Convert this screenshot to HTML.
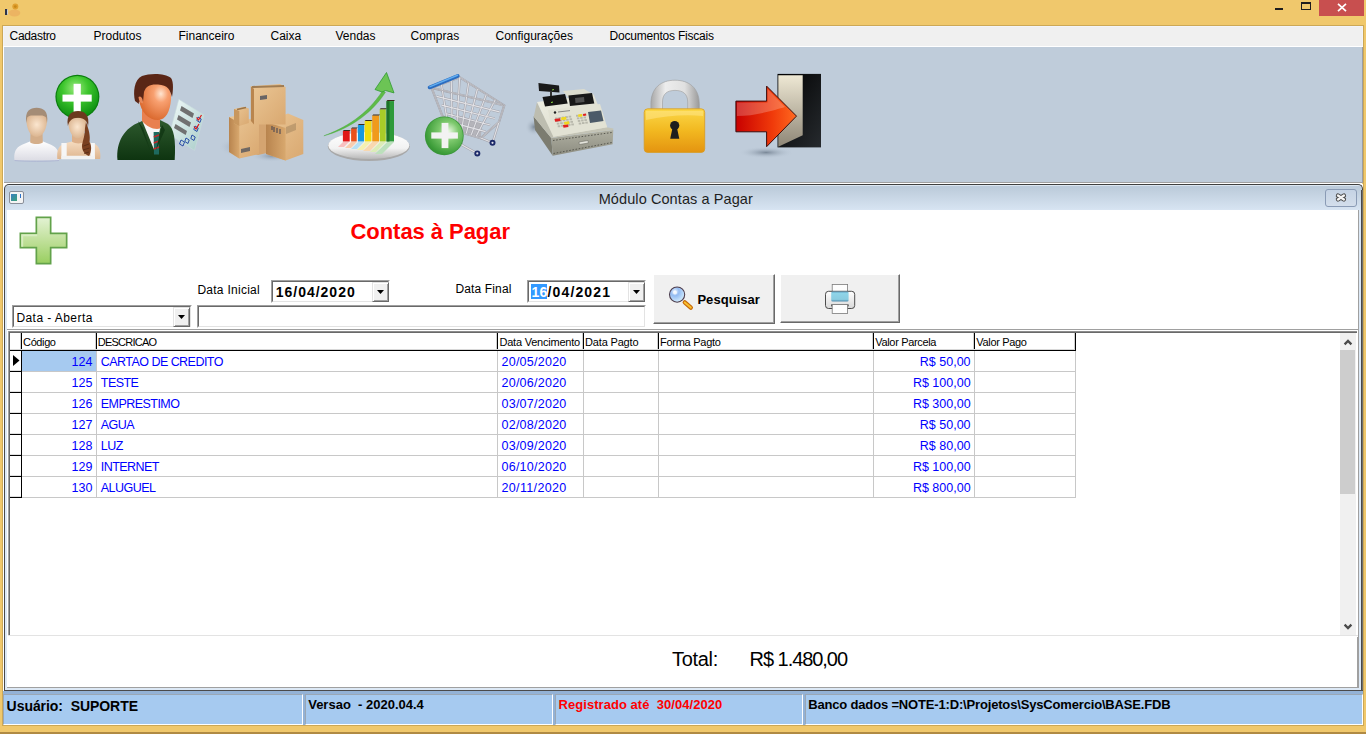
<!DOCTYPE html>
<html><head><meta charset="utf-8">
<style>
*{margin:0;padding:0;box-sizing:border-box}
html,body{width:1366px;height:734px;overflow:hidden;background:#F0C86C;font-family:"Liberation Sans",sans-serif;color:#000}
.a{position:absolute}
.t{position:absolute;white-space:nowrap;line-height:1}
svg{position:absolute;overflow:visible}
</style></head><body>

<div class="a" style="left:1275px;top:8px;width:8px;height:2px;background:#1E1E1E;"></div>
<div class="a" style="left:1301px;top:2px;width:10px;height:8px;border:1px solid #1E1E1E;border-top-width:2px;"></div>
<div class="a" style="left:1319px;top:0px;width:45px;height:16px;background:#C84F4F;"></div>
<svg style="left:1337px;top:2.5px" width="10" height="9" viewBox="0 0 10 9"><path d="M1 0.8L9 8.2M9 0.8L1 8.2" stroke="#fff" stroke-width="1.7"/></svg>
<svg style="left:0;top:0" width="24" height="20" viewBox="0 0 24 20"><ellipse cx="14.5" cy="13" rx="5.8" ry="3.4" fill="#ECB462"/><circle cx="15.3" cy="6.6" r="3" fill="#E0A030"/><circle cx="15.3" cy="6.6" r="1.4" fill="#C88818"/><rect x="5" y="9" width="2.2" height="6" fill="#2E3448"/><rect x="7.2" y="9.5" width="0.8" height="5" fill="#C8D8F0"/></svg>
<div class="a" style="left:2px;top:25px;width:1362px;height:1px;background:#CCA856;"></div>
<div class="a" style="left:2px;top:25px;width:1px;height:700px;background:#CCA856;"></div>
<div class="a" style="left:1363px;top:25px;width:1px;height:700px;background:#CCA856;"></div>
<div class="a" style="left:3px;top:26px;width:1360px;height:20px;background:#F2F4FA;"></div>
<div class="a" style="left:4px;top:27px;width:1358px;height:19px;background:#F0F0F0;"></div>
<div class="a" style="left:3px;top:46px;width:1360px;height:1px;background:#FFFFFF;"></div>
<div class="a" style="left:3px;top:47px;width:1px;height:645px;background:#FFFFFF;"></div>
<div class="t" style="left:9.60px;top:29.84px;font-size:12.00px;letter-spacing:-0.331px;">Cadastro</div>
<div class="t" style="left:93.50px;top:29.84px;font-size:12.00px;">Produtos</div>
<div class="t" style="left:178.50px;top:29.84px;font-size:12.00px;">Financeiro</div>
<div class="t" style="left:270.50px;top:29.84px;font-size:12.00px;">Caixa</div>
<div class="t" style="left:335.50px;top:29.84px;font-size:12.00px;">Vendas</div>
<div class="t" style="left:410.50px;top:29.84px;font-size:12.00px;">Compras</div>
<div class="t" style="left:495.50px;top:29.84px;font-size:12.00px;">Configurações</div>
<div class="t" style="left:609.50px;top:29.84px;font-size:12.00px;letter-spacing:-0.209px;">Documentos Fiscais</div>
<div class="a" style="left:4px;top:47px;width:1358px;height:135px;background:#BFCCDA;"></div>
<div class="a" style="left:1362px;top:47px;width:1px;height:136px;background:#9A9EA8;"></div>
<div class="a" style="left:4px;top:182px;width:1358px;height:1px;background:#A0A0A0;"></div>
<div class="a" style="left:4px;top:183px;width:1358px;height:1px;background:#FFFFFF;"></div>
<svg style="left:10px;top:70px" width="100" height="100" viewBox="0 0 100 100">
<defs>
<radialGradient id="g1" cx="0.45" cy="0.3" r="0.7"><stop offset="0" stop-color="#9BEA7E"/><stop offset="0.45" stop-color="#3CC52C"/><stop offset="1" stop-color="#0C8E10"/></radialGradient>
<radialGradient id="sk1" cx="0.5" cy="0.45" r="0.6"><stop offset="0" stop-color="#FBE6CF"/><stop offset="1" stop-color="#D8B08A"/></radialGradient>
<linearGradient id="ts1" x1="0" y1="0" x2="0" y2="1"><stop offset="0" stop-color="#FFFFFF"/><stop offset="1" stop-color="#DCDCE4"/></linearGradient>
<linearGradient id="skb" x1="0" y1="0" x2="0" y2="1"><stop offset="0" stop-color="#F6DCC0"/><stop offset="1" stop-color="#DDB48E"/></linearGradient>
</defs>
<circle cx="67.4" cy="26.8" r="22" fill="#0A7E0E"/>
<circle cx="67.4" cy="26.8" r="20.8" fill="url(#g1)"/>
<rect x="52.5" y="24.6" width="29.2" height="7" fill="#fff"/>
<rect x="63.6" y="13.8" width="7.2" height="28" fill="#fff"/>
<!-- man -->
<path d="M4.5 90.5 C3.5 83 5.5 77.5 12 74.8 L20.5 71.2 C24 73.5 29 73.5 32.5 71.2 L41 74.8 C47.5 77.5 50 83 49 90.5 Z" fill="url(#ts1)"/>
<path d="M4.5 90.5 C15 91.5 38 91.5 49 90.5" stroke="#A8B0D0" stroke-width="0.8" fill="none"/>
<path d="M20.5 62 L32.5 62 L32.8 72.5 C29 74.5 24 74.5 20.2 72.5 Z" fill="#D4AE8A"/>
<path d="M16.3 49 C16.3 43 21 44.8 26.6 44.8 C32.2 44.8 37.2 43 37.2 49 C37.2 58 33 67 26.6 67 C20.2 67 16.3 58 16.3 49 Z" fill="url(#sk1)"/>
<path d="M16.4 53 C14.5 41 20 37.8 26.6 37.8 C33.2 37.8 38.8 41 37 53 L36.2 47.5 C33.5 44.5 30 45.6 26.6 45.6 C23 45.6 19.5 44.5 17.2 47.5 Z" fill="#A48C76"/>
<!-- woman -->
<path d="M47.3 89 C46.5 81 48.5 75.5 54 73.5 L62 71.5 L74.7 71.5 L84 73.5 C89 75.5 91 81 90.2 89 Z" fill="url(#skb)"/>
<rect x="51.4" y="73" width="5.3" height="16" fill="#F6F6F6"/>
<rect x="80.4" y="73" width="4.5" height="16" fill="#F6F6F6"/>
<path d="M51.4 85.7 L84.9 85.7 L84.9 89.3 L51.4 89.3Z" fill="#F2F2F2"/>
<path d="M62 63 L74.7 63 L74.7 71.8 C71 74 66 74 62 71.8 Z" fill="#DDB08A"/>
<path d="M58.3 52 C58.3 46 62.5 47.5 67.7 47.5 C72.9 47.5 76.3 46 76.3 52 C76.3 60 73 68.5 67.7 68.5 C62.4 68.5 58.3 60 58.3 52 Z" fill="url(#sk1)"/>
<path d="M57.9 56 C56 45 61.5 41.1 68.1 41.1 C74.7 41.1 80 45 78 57 C77.5 51 74.5 48 68 47.8 C62 47.8 59 51 57.9 56 Z" fill="#6C3A1E"/>
<path d="M76 52 C79 60 80.5 66 79.5 72 C82 76 81.5 82 79 86 C74.5 84.5 71.5 80 72 75 C73 70 75.2 64 75 58 Z" fill="#7A4020"/>
<path d="M73.5 76 L79 74 M73 80 L79.5 78 M74 83.5 L79 82" stroke="#4E2612" stroke-width="0.7"/>
</svg>
<svg style="left:110px;top:70px" width="100" height="100" viewBox="0 0 100 100">
<defs>
<radialGradient id="fc2" cx="0.68" cy="0.32" r="0.75"><stop offset="0" stop-color="#FFE6D2"/><stop offset="0.3" stop-color="#F8A070"/><stop offset="1" stop-color="#D86428"/></radialGradient>
<linearGradient id="st2" x1="0" y1="0" x2="0" y2="1"><stop offset="0" stop-color="#2E5A2E"/><stop offset="1" stop-color="#0E3410"/></linearGradient>
<linearGradient id="pp2" x1="0" y1="0" x2="1" y2="1"><stop offset="0" stop-color="#F2FAFA"/><stop offset="1" stop-color="#A8CCC8"/></linearGradient>
</defs>
<path d="M68.8 29.3 L94 45 L84.5 80.4 L59.3 64.7 Z" fill="url(#pp2)" stroke="#C8DCDC" stroke-width="0.6"/>
<path d="M71.5 36 L84 43.5 L82.5 48 L70 40.5Z M68.5 45 L81 52.5 L79.5 57 L67 49.5Z M65.5 54 L77 61 L75.7 65 L64 58Z" fill="#707070"/>
<path d="M88 47l-1.2 3.5 3.2 2 1.2-3.5z M85 56l-1.2 3.5 3.2 2 1.2-3.5z M82 65l-1.2 3.5 3.2 2 1.2-3.5z M76 68l-1.2 3.5 3.2 2 1.2-3.5z M71 70l-1.5 4 3.5 2 1.5-4z" fill="none" stroke="#1A40A0" stroke-width="0.9"/>
<path d="M86.5 47.5l2 2.5 3-5 M84 56.5l2 2.5 3-5" fill="none" stroke="#E01818" stroke-width="1.2"/>
<path d="M7.5 90 C6 72 14 58 30 52 L36 49 L50 50 L58 54 C64 58 66 70 64.7 90 Z" fill="url(#st2)"/>
<path d="M32.5 51.5 L50.5 57 L45 82 Z" fill="#F6F6F6"/>
<path d="M43.6 62 L49 62 L49 84.5 L44 84.5 Z" fill="#1E6A5E"/>
<path d="M43.8 67 L49 65 M43.8 73 L49 71 M43.8 79 L49 77" stroke="#C02828" stroke-width="1.4"/>
<path d="M28 51 L40 80 L33 58 Z M52 55 L46 80 L55 60Z" fill="#143A16"/>
<path d="M32 39.5 L50 42 L50 58.6 C44 60 37 57 32 51 Z" fill="#E88050"/>
<path d="M29 22 C28 14 36 11 46 11.5 C57 12 62 20 61 30 C60 41 56 50 48 50 C38 50 31 42 29 30 Z" fill="url(#fc2)"/>
<path d="M25 31 C23 22 24 10 32 6 C40 3 55 3 61 8 C64 12 63 22 62 27 C60 20 58 15 48 14.5 C40 14 36 16 34 22 L33 32 C31 30 28 31 29 34 Z" fill="#5A2616"/>
<path d="M28.5 27 C31 25 33 29 33 33 C31 34 29 32 28.5 27Z" fill="#E8895A"/>
</svg>
<svg style="left:210px;top:70px" width="100" height="100" viewBox="0 0 100 100">
<defs>
<linearGradient id="bx1" x1="0" y1="0" x2="1" y2="1"><stop offset="0" stop-color="#EBC796"/><stop offset="1" stop-color="#D9A870"/></linearGradient>
<linearGradient id="bx2" x1="0" y1="0" x2="1" y2="0"><stop offset="0" stop-color="#B8844E"/><stop offset="1" stop-color="#D8A86E"/></linearGradient>
<radialGradient id="sh3" cx="0.5" cy="0.5" r="0.5"><stop offset="0" stop-color="#8A98A8"/><stop offset="1" stop-color="#BFCCDA" stop-opacity="0"/></radialGradient>
</defs>
<ellipse cx="30" cy="77" rx="22" ry="10" fill="url(#sh3)"/>
<ellipse cx="62" cy="86" rx="22" ry="6" fill="url(#sh3)"/>
<path d="M38 50 L57 47 L57 83 L48 85 L38 82 Z" fill="#D4A470"/>
<path d="M38 50 L44 52 L44 84 L38 82Z" fill="#C08A54"/>
<!-- right box -->
<path d="M56 52 L78 43.6 L93.3 50 L93.3 84 L75.6 90.6 L56 84 Z" fill="url(#bx1)"/>
<path d="M56 52 L75.6 58 L75.6 90.6 L56 84 Z" fill="url(#bx2)"/>
<path d="M76 57 L86 53 L86 60 L76 64Z" fill="#A88860" opacity="0.6"/>
<path d="M62 56 L62 60 M64 57 L64 62 M67 58 L67 63 M70 59 L70 64" stroke="#404050" stroke-width="1"/>
<!-- left box -->
<path d="M19 47 L23.5 46.3 L49 51 L49 84 L29.3 88.6 L19 82 Z" fill="url(#bx1)"/>
<path d="M19 47 L29.3 53 L29.3 88.6 L19 82 Z" fill="url(#bx2)"/>
<path d="M31 79 L40 77 L40 81 L31 83Z" fill="#404858" opacity="0.7"/>
<!-- small box -->
<path d="M24 39 L34 36.8 L38.8 38.5 L38.8 53 L29.3 55.9 L24 53.5Z" fill="url(#bx1)"/>
<path d="M24 39 L29.3 41 L29.3 55.9 L24 53.5Z" fill="#C8975E"/>
<path d="M27 39.5 L36 37.5" stroke="#9A7448" stroke-width="1.5"/>
<!-- top box -->
<path d="M40.9 16.3 L70 14 L75.6 17 L75.6 54.5 L44 54.5 L40.9 50 Z" fill="url(#bx1)"/>
<path d="M40.9 16.3 L44 19 L44 54.5 L40.9 51 Z" fill="#B9854E"/>
<path d="M42 17 L74 16" stroke="#A07C52" stroke-width="2"/>
<path d="M50 26 L57 25 L57 29 L50 30Z" fill="#404858" opacity="0.75"/>
</svg>
<svg style="left:315px;top:65px" width="100" height="100" viewBox="0 0 100 100">
<defs>
<linearGradient id="el4" x1="0" y1="0" x2="0" y2="1"><stop offset="0" stop-color="#FFFFFF"/><stop offset="0.6" stop-color="#F2F2F2"/><stop offset="1" stop-color="#B8B8B8"/></linearGradient>
</defs>
<ellipse cx="53.8" cy="81.5" rx="41" ry="14.5" fill="#A8A8A8"/>
<ellipse cx="53.8" cy="80.5" rx="40.5" ry="13.5" fill="url(#el4)"/>
<path d="M28 77 h6 l-5 5 h-6z" fill="#F8C0C0"/>
<path d="M36 77 h6 l-6 6 h-6z" fill="#F8CDB0"/>
<path d="M43 77 h6 l-7 7 h-6z" fill="#B8E0F4"/>
<path d="M50 77 h6 l-8 8 h-6z" fill="#F6F0B0"/>
<path d="M57 77 h7 l-9 9 h-7z" fill="#F8D8B0"/>
<path d="M65 77 h6 l-10 10 h-6z" fill="#DCECB8"/>
<path d="M72 77 h7 l-12 12 h-7z" fill="#BCE0BC"/>
<rect x="27.9" y="66" width="6.8" height="10.5" fill="#E01818"/>
<rect x="36.1" y="63.4" width="5.6" height="13.1" fill="#E8501C"/>
<rect x="42.9" y="60" width="6.1" height="16.5" fill="#1898E0"/>
<rect x="49.7" y="55.9" width="6.8" height="20.6" fill="#F0DC10"/>
<rect x="57.2" y="50.4" width="6.8" height="26.1" fill="#F09A1C"/>
<rect x="64.7" y="44.3" width="6.1" height="32.2" fill="#A8CC28"/>
<rect x="71.5" y="36.1" width="7.5" height="40.4" fill="#2E9A3A"/>
<rect x="71.5" y="36.1" width="3" height="40.4" fill="#1E7028"/>
<path d="M27.9 66 h6.8 l1 -1 h-6.8z M36.1 63.4 h5.6 l1 -1 h-5.6z M42.9 60 h6.1 l1 -1 h-6.1z M49.7 55.9 h6.8 l1 -1 h-6.8z M57.2 50.4 h6.8 l1 -1 h-6.8z M64.7 44.3 h6.1 l1 -1 h-6.1z M71.5 36.1 h7.5 l1 -1 h-7.5z" fill="#3A2A1A"/>
<path d="M8.9 70.8 C30 63 52 50 67.5 25.8 L70.5 27.2 C55 51 32 64.5 8.9 70.8 Z" fill="#5EBA48" stroke="#44A83C" stroke-width="0.4"/>
<path d="M71.5 7.5 L79 27.9 L70.5 25.5 L67 27 L60 24.5 Z" fill="#6CC455" stroke="#2E9A2E" stroke-width="0.8"/>
</svg>
<svg style="left:415px;top:65px" width="100" height="100" viewBox="0 0 100 100">
<defs>
<radialGradient id="gc5" cx="0.62" cy="0.38" r="0.75"><stop offset="0" stop-color="#E8F8E0"/><stop offset="0.35" stop-color="#7CC86C"/><stop offset="0.8" stop-color="#3E9E3A"/><stop offset="1" stop-color="#2C862C"/></radialGradient>
</defs>
<path d="M41.2 49.7 L67 58 L65.8 73.1 L42.4 67.3 Z" fill="#B4B4BA"/>
<g fill="none" stroke="#A4A4AC" stroke-width="2.3">
<path d="M16.6 22.8 L44.7 12.2 L89.2 40.4 L84.0 57.0 L65.8 73.1 L41.5 66.0 L27.0 50.0 Z"/>
<path d="M21.6 31.4 L84.5 46.9 M26.6 40.1 L79.8 53.5 M31.5 48.7 L75.2 60.0 M36.5 57.4 L70.5 66.6 M44.7 12.2 L41.5 66.0 M53.6 17.8 L46.4 67.4 M62.5 23.5 L51.2 68.8 M71.4 29.1 L56.1 70.3 M80.3 34.8 L60.9 71.7 M26.4 19.1 L32.1 55.6 M36.3 15.4 L37.1 61.2"/>
<path d="M16.6 22.8 L89.2 40.4"/>
<path d="M42 66 L47 80 L62.3 88.4 M65.8 73.1 L77.5 77.8 M84 57 L77.5 77.8"/>
</g>
<g fill="none" stroke="#E2E2E6" stroke-width="1.1">
<path d="M16.6 22.8 L44.7 12.2 L89.2 40.4 L84.0 57.0 L65.8 73.1 L41.5 66.0 L27.0 50.0 Z"/>
<path d="M21.6 31.4 L84.5 46.9 M26.6 40.1 L79.8 53.5 M31.5 48.7 L75.2 60.0 M36.5 57.4 L70.5 66.6 M44.7 12.2 L41.5 66.0 M53.6 17.8 L46.4 67.4 M62.5 23.5 L51.2 68.8 M71.4 29.1 L56.1 70.3 M80.3 34.8 L60.9 71.7 M26.4 19.1 L32.1 55.6 M36.3 15.4 L37.1 61.2"/>
<path d="M16.6 22.8 L89.2 40.4"/>
<path d="M42 66 L47 80 L62.3 88.4 M65.8 73.1 L77.5 77.8 M84 57 L77.5 77.8"/>
</g>
<g fill="none" stroke="#8E8E96" stroke-width="0.6">
<path d="M16.6 22.8 L44.7 12.2 L89.2 40.4 L84.0 57.0 L65.8 73.1 L41.5 66.0 L27.0 50.0 Z"/>
<path d="M16.6 22.8 L89.2 40.4"/>
</g>
<path d="M14.6 22.4 L42.7 11" stroke="#2A6CC0" stroke-width="3.8" stroke-linecap="round"/>
<path d="M15 21.6 L42.5 10.3" stroke="#62AEF0" stroke-width="1.5" stroke-linecap="round"/>
<circle cx="62.3" cy="88.4" r="3" fill="#1C2A6A"/>
<circle cx="77.5" cy="77.8" r="3" fill="#1C2A6A"/>
<circle cx="62.3" cy="88.4" r="1.1" fill="#E0E0E8"/>
<circle cx="77.5" cy="77.8" r="1.1" fill="#E0E0E8"/>
<circle cx="29.3" cy="70.8" r="19.4" fill="#3A963A"/>
<circle cx="29.3" cy="70.8" r="18.6" fill="url(#gc5)"/>
<rect x="16.3" y="67.4" width="26.6" height="6.2" fill="#F2F2F2"/>
<rect x="26.6" y="57.9" width="6.8" height="25.2" fill="#F2F2F2"/>
</svg>
<svg style="left:520px;top:70px" width="100" height="100" viewBox="0 0 100 100">
<defs>
<radialGradient id="sh6" cx="0.5" cy="0.5" r="0.5"><stop offset="0" stop-color="#7E8C9C"/><stop offset="1" stop-color="#BFCCDA" stop-opacity="0"/></radialGradient>
<linearGradient id="dr6" x1="0" y1="0" x2="0" y2="1"><stop offset="0" stop-color="#B0B0A2"/><stop offset="1" stop-color="#8C8C80"/></linearGradient>
<linearGradient id="bt6" x1="0" y1="0" x2="1" y2="1"><stop offset="0" stop-color="#EEEEE2"/><stop offset="1" stop-color="#D6D6C8"/></linearGradient>
</defs>
<ellipse cx="14" cy="57" rx="9" ry="9" fill="url(#sh6)"/>
<path d="M13.6 46.3 L31.3 68.1 L32.7 85.8 L15 60 Z" fill="#7C7C70"/>
<path d="M31.3 68.1 L93.3 60 L92.6 74.3 L32.7 85.8 Z" fill="url(#dr6)"/>
<path d="M13.6 46.3 L20 44.5 L93.3 58.5 L93.3 60 L31.3 68.1 Z" fill="#C4C4B6"/>
<path d="M33 70.5 L92 62.5" stroke="#505048" stroke-width="0.9" stroke-dasharray="1.6 1.6"/>
<path d="M33.5 83.5 L92 72.5" stroke="#505048" stroke-width="0.9" stroke-dasharray="1.6 1.6"/>
<path d="M59 72 L68 70.5 L68.3 73 L59.3 74.5Z" fill="#E4E4DC" stroke="#606058" stroke-width="0.5"/>
<path d="M17 32 L33.4 66.8 L31.3 68.1 L13.8 46.5 Z" fill="#BDBDB0"/>
<path d="M17 32 L73.6 24.5 L87.2 57.2 L33.4 66.8 Z" fill="url(#bt6)"/>
<path d="M28 40 L80 34 L87.2 57.2 L33.4 66.8 Z" fill="#E2E2D4"/>
<path d="M43 21 L64 19 L73.6 24.5 L48 27.5 Z" fill="#DCDCCE"/>
<path d="M18.4 13 L39 15.5 L39.5 22.5 L19 21 Z" fill="#1A1A1A"/>
<path d="M30 21 L32 21 L32 26 L30 26Z" fill="#303030"/>
<path d="M22.5 27 L45 24 L47.7 33.5 L25 36.5 Z" fill="#141414"/>
<path d="M48.4 25.5 L72 23 L74.3 33.5 L50 36 Z" fill="#181818"/>
<path d="M55 28 L64 27 L64.5 32 L55.5 33Z" fill="#505050"/>
<path d="M31 32.5 L33 32" stroke="#90E040" stroke-width="1"/>
<path d="M32 20 L34 19.5" stroke="#90E040" stroke-width="0.9"/>
<path d="M68 42 L81 40.5 L83.5 51 L70 53 Z" fill="#4C5A68"/>
<circle cx="35" cy="42.5" r="1.2" fill="#202020"/>
<path d="M38 42 L50 40.6" stroke="#707070" stroke-width="0.8"/>
<rect x="35.0" y="47.5" width="2.6" height="1.9" fill="#B8B8AC"/>
<rect x="38.4" y="47.0" width="2.6" height="1.9" fill="#B8B8AC"/>
<rect x="41.8" y="46.6" width="2.6" height="1.9" fill="#B8B8AC"/>
<rect x="45.2" y="46.1" width="2.6" height="1.9" fill="#B8B8AC"/>
<rect x="48.6" y="45.7" width="2.6" height="1.9" fill="#B8B8AC"/>
<rect x="35.9" y="50.1" width="2.6" height="1.9" fill="#B8B8AC"/>
<rect x="39.3" y="49.6" width="2.6" height="1.9" fill="#B8B8AC"/>
<rect x="42.7" y="49.2" width="2.6" height="1.9" fill="#B8B8AC"/>
<rect x="46.1" y="48.8" width="2.6" height="1.9" fill="#B8B8AC"/>
<rect x="49.5" y="48.3" width="2.6" height="1.9" fill="#B8B8AC"/>
<rect x="36.8" y="52.7" width="2.6" height="1.9" fill="#B8B8AC"/>
<rect x="40.2" y="52.2" width="2.6" height="1.9" fill="#B8B8AC"/>
<rect x="43.6" y="51.8" width="2.6" height="1.9" fill="#B8B8AC"/>
<rect x="47.0" y="51.4" width="2.6" height="1.9" fill="#B8B8AC"/>
<rect x="50.4" y="50.9" width="2.6" height="1.9" fill="#B8B8AC"/>
<rect x="37.7" y="55.3" width="2.6" height="1.9" fill="#B8B8AC"/>
<rect x="41.1" y="54.8" width="2.6" height="1.9" fill="#B8B8AC"/>
<rect x="44.5" y="54.4" width="2.6" height="1.9" fill="#B8B8AC"/>
<rect x="47.9" y="53.9" width="2.6" height="1.9" fill="#B8B8AC"/>
<rect x="51.3" y="53.5" width="2.6" height="1.9" fill="#B8B8AC"/>
<rect x="56.0" y="44.8" width="2.5" height="1.9" fill="#B8B8AC"/>
<rect x="59.3" y="44.3" width="2.5" height="1.9" fill="#B8B8AC"/>
<rect x="62.6" y="43.9" width="2.5" height="1.9" fill="#B8B8AC"/>
<rect x="56.9" y="47.4" width="2.5" height="1.9" fill="#B8B8AC"/>
<rect x="60.2" y="46.9" width="2.5" height="1.9" fill="#B8B8AC"/>
<rect x="63.5" y="46.5" width="2.5" height="1.9" fill="#B8B8AC"/>
<rect x="57.8" y="50.0" width="2.5" height="1.9" fill="#B8B8AC"/>
<rect x="61.1" y="49.5" width="2.5" height="1.9" fill="#B8B8AC"/>
<rect x="64.4" y="49.1" width="2.5" height="1.9" fill="#B8B8AC"/>
<rect x="58.7" y="52.6" width="2.5" height="1.9" fill="#B8B8AC"/>
<rect x="62.0" y="52.1" width="2.5" height="1.9" fill="#B8B8AC"/>
<rect x="65.3" y="51.7" width="2.5" height="1.9" fill="#B8B8AC"/>
<path d="M34.5 49 L40 48.2 L40.6 51 L35.1 51.8Z M43 55 L48 54.3 L48.5 57 L43.5 57.7Z" fill="#E02020"/>
<path d="M41 47.5 L46 46.8 L46.5 49.5 L41.5 50.2Z M44 52 L49 51.3 L49.5 54 L44.5 54.7Z M58 44.5 L62 44 L62.4 46.4 L58.4 46.9Z" fill="#F0D820"/>
<path d="M63 44 L66 43.6 L66.3 45.6 L63.3 46Z" fill="#E02020"/>
</svg>
<svg style="left:625px;top:70px" width="100" height="100" viewBox="0 0 100 100">
<defs>
<linearGradient id="sk7" x1="0" y1="0" x2="1" y2="0"><stop offset="0" stop-color="#A8A8A8"/><stop offset="0.3" stop-color="#EDEDED"/><stop offset="0.7" stop-color="#E0E0E0"/><stop offset="1" stop-color="#9A9A9A"/></linearGradient>
<linearGradient id="bd7" x1="0" y1="0" x2="0" y2="1"><stop offset="0" stop-color="#FBD848"/><stop offset="0.5" stop-color="#F2B820"/><stop offset="1" stop-color="#E49410"/></linearGradient>
</defs>
<path d="M25.9 40 L25.9 34 C25.9 18 36 10.2 50 10.2 C64 10.2 74.3 18 74.3 34 L74.3 40 L62.7 40 L62.7 32 C62.7 24 58 20.4 50 20.4 C42 20.4 37.5 24 37.5 32 L37.5 40 Z" fill="url(#sk7)" stroke="#9A9A9A" stroke-width="0.6"/>
<rect x="19.2" y="38.8" width="60.5" height="43.6" rx="3.5" fill="url(#bd7)" stroke="#D89A20" stroke-width="0.8"/>
<path d="M21 41 L78 41 L78 46 C60 44 40 46 21 50 Z" fill="#FFE890" opacity="0.5"/>
<circle cx="49.7" cy="55.6" r="4.6" fill="#1E1E1E"/>
<path d="M47.5 58 L52 58 L54.3 68.8 L45.2 68.8 Z" fill="#1E1E1E"/>
</svg>
<svg style="left:725px;top:65px" width="100" height="100" viewBox="0 0 100 100">
<defs>
<radialGradient id="sh8" cx="0.5" cy="0.5" r="0.5"><stop offset="0" stop-color="#7A8898"/><stop offset="1" stop-color="#BFCCDA" stop-opacity="0"/></radialGradient>
<linearGradient id="fr8" x1="0" y1="0" x2="1" y2="1"><stop offset="0" stop-color="#000000"/><stop offset="1" stop-color="#262A2E"/></linearGradient>
<linearGradient id="dp8" x1="0" y1="0" x2="0" y2="1"><stop offset="0" stop-color="#EEE8D4"/><stop offset="1" stop-color="#8E8676"/></linearGradient>
<linearGradient id="ar8" x1="0" y1="0" x2="1" y2="0"><stop offset="0" stop-color="#C80000"/><stop offset="0.6" stop-color="#F03A0A"/><stop offset="1" stop-color="#FF6A20"/></linearGradient>
</defs>
<ellipse cx="41" cy="87.5" rx="28" ry="6" fill="url(#sh8)"/>
<rect x="52.5" y="8.9" width="43.5" height="73.5" fill="url(#fr8)"/>
<path d="M53.3 10.3 L77.7 10.3 L77.7 70.2 L53.3 81.7 Z" fill="url(#dp8)"/>
<path d="M10.9 36.1 L41.6 36.1 L41.6 21.1 L71.5 51.1 L41.6 81.7 L41.6 66.8 L10.9 66.8 Z" fill="url(#ar8)" stroke="#3A0E0E" stroke-width="1"/>
<path d="M12 37.5 L42.5 37.5 L42.5 24 L60 42 C50 45 30 51 12 51 Z" fill="#FFFFFF" opacity="0.22"/>
</svg>

<div class="a" style="left:3px;top:184px;width:1360px;height:507px;background:#fff;"></div>
<div class="a" style="left:4px;top:184px;width:1359px;height:507px;border:1px solid #404040;border-bottom:none;border-radius:5px 5px 0 0;background:linear-gradient(#DCE6F0,#DCE6F0 1px,#BCCBDB 1px,#BECDDC 4px,#D6E3F1 24px,#DCE8F5 26px);"></div>
<div class="a" style="left:7px;top:210px;width:1351px;height:480px;background:#FFFFFF;"></div>
<div class="a" style="left:1357px;top:210px;width:1px;height:480px;background:#FFFFFF;"></div>
<div class="t" style="left:598.70px;top:191.92px;font-size:14.50px;color:#1E1E1E;letter-spacing:0.089px;">Módulo Contas a Pagar</div>
<div class="a" style="left:9px;top:191px;width:15px;height:13px;border:1px solid #8A8F99;border-radius:2px;background:#F4F4F4"></div>
<div class="a" style="left:11px;top:194px;width:6px;height:7px;background:linear-gradient(135deg,#3A7FC0,#3CA27A);"></div>
<div class="a" style="left:20px;top:194px;width:1px;height:4px;background:#2A72C8;"></div>
<div class="a" style="left:1325px;top:189px;width:32px;height:18px;border:1px solid #8A9BB5;border-radius:3px;background:linear-gradient(#C5D3E4,#D3DEEB)"></div>
<svg style="left:1334px;top:191px" width="14" height="12" viewBox="0 0 14 12"><path d="M4.0 4.6L9.9 8.4M9.9 4.6L4.0 8.4" stroke="#4A4A4A" stroke-width="4.4" stroke-linecap="round"/><path d="M4.0 4.6L9.9 8.4M9.9 4.6L4.0 8.4" stroke="#F4F4F4" stroke-width="2.4" stroke-linecap="round"/></svg>
<svg style="left:18.6px;top:215.6px" width="49" height="49" viewBox="0 0 49 49">
<defs><linearGradient id="gp" x1="0" y1="0" x2="0" y2="1"><stop offset="0" stop-color="#E2F2D2"/><stop offset="0.5" stop-color="#C0E09A"/><stop offset="1" stop-color="#9ACF62"/></linearGradient></defs>
<path d="M16.5 0.5h16v16h16v16h-16v16h-16v-16h-16v-16h16z" fill="#62A24A"/>
<path d="M18.2 2.2h12.6v16h16v12.6h-16v16h-12.6v-16h-16v-12.6h16z" fill="url(#gp)"/>
<path d="M2.2 18.2h16v2h-14v10.6h-2z" fill="#DDF0C8" opacity="0.8"/>
</svg>
<div class="t" style="left:350.50px;top:220.87px;font-size:22.00px;font-weight:bold;color:#FF0000;letter-spacing:-0.051px;">Contas à Pagar</div>
<div class="t" style="left:197.40px;top:283.84px;font-size:12.00px;letter-spacing:0.269px;">Data Inicial</div>
<div class="a" style="left:271px;top:280px;width:119px;height:23px;background:#fff;border-top:1px solid #A0A0A0;border-left:1px solid #A0A0A0;border-right:1px solid #FFFFFF;border-bottom:1px solid #FFFFFF;"><div class="a" style="left:0;top:0;right:0;bottom:0;border-top:1px solid #696969;border-left:1px solid #696969;border-right:1px solid #E3E3E3;border-bottom:1px solid #E3E3E3"></div></div>
<div class="a" style="left:372px;top:282px;width:17px;height:20px;background:#F0F0F0;border-top:1px solid #E3E3E3;border-left:1px solid #E3E3E3;border-right:1px solid #696969;border-bottom:1px solid #696969;box-shadow:inset 1px 1px 0 #fff,inset -1px -1px 0 #A0A0A0"></div>
<svg style="left:377.0px;top:289.5px" width="8" height="4" viewBox="0 0 8 4"><path d="M0 0h7l-3.5 4z" fill="#000"/></svg>
<div class="t" style="left:275.80px;top:285.14px;font-size:14.00px;font-weight:bold;letter-spacing:0.981px;">16/04/2020</div>
<div class="t" style="left:455.50px;top:282.84px;font-size:12.00px;letter-spacing:0.131px;">Data Final</div>
<div class="a" style="left:527px;top:280px;width:119px;height:23px;background:#fff;border-top:1px solid #A0A0A0;border-left:1px solid #A0A0A0;border-right:1px solid #FFFFFF;border-bottom:1px solid #FFFFFF;"><div class="a" style="left:0;top:0;right:0;bottom:0;border-top:1px solid #696969;border-left:1px solid #696969;border-right:1px solid #E3E3E3;border-bottom:1px solid #E3E3E3"></div></div>
<div class="a" style="left:628px;top:282px;width:17px;height:20px;background:#F0F0F0;border-top:1px solid #E3E3E3;border-left:1px solid #E3E3E3;border-right:1px solid #696969;border-bottom:1px solid #696969;box-shadow:inset 1px 1px 0 #fff,inset -1px -1px 0 #A0A0A0"></div>
<svg style="left:633.0px;top:289.5px" width="8" height="4" viewBox="0 0 8 4"><path d="M0 0h7l-3.5 4z" fill="#000"/></svg>
<div class="a" style="left:531px;top:284px;width:16px;height:15px;background:#3399FF;"></div>
<div class="t" style="left:531.60px;top:285.14px;font-size:14.00px;font-weight:bold;color:#FFFFFF;">16</div>
<div class="t" style="left:547.50px;top:285.14px;font-size:14.00px;font-weight:bold;letter-spacing:1.139px;">/04/2021</div>
<div class="a" style="left:12px;top:305px;width:180px;height:23px;background:#fff;border-top:1px solid #A0A0A0;border-left:1px solid #A0A0A0;border-right:1px solid #FFFFFF;border-bottom:1px solid #FFFFFF;"><div class="a" style="left:0;top:0;right:0;bottom:0;border-top:1px solid #696969;border-left:1px solid #696969;border-right:1px solid #E3E3E3;border-bottom:1px solid #E3E3E3"></div></div>
<div class="a" style="left:173px;top:307px;width:17px;height:20px;background:#F0F0F0;border-top:1px solid #E3E3E3;border-left:1px solid #E3E3E3;border-right:1px solid #696969;border-bottom:1px solid #696969;box-shadow:inset 1px 1px 0 #fff,inset -1px -1px 0 #A0A0A0"></div>
<svg style="left:178.0px;top:314.5px" width="8" height="4" viewBox="0 0 8 4"><path d="M0 0h7l-3.5 4z" fill="#000"/></svg>
<div class="t" style="left:16.40px;top:311.84px;font-size:12.00px;letter-spacing:0.438px;">Data - Aberta</div>
<div class="a" style="left:197px;top:305px;width:449px;height:23px;background:#fff;border-top:1px solid #A0A0A0;border-left:1px solid #A0A0A0;border-right:1px solid #FFFFFF;border-bottom:1px solid #FFFFFF;"><div class="a" style="left:0;top:0;right:0;bottom:0;border-top:1px solid #696969;border-left:1px solid #696969;border-right:1px solid #E3E3E3;border-bottom:1px solid #E3E3E3"></div></div>
<div class="a" style="left:653px;top:274px;width:122px;height:50px;background:#F0F0F0;border-top:1px solid #FFFFFF;border-left:1px solid #FFFFFF;border-right:1px solid #696969;border-bottom:1px solid #696969;box-shadow:inset -1px -1px 0 #A0A0A0"></div>
<div class="a" style="left:780px;top:274px;width:120px;height:49px;background:#F0F0F0;border-top:1px solid #FFFFFF;border-left:1px solid #FFFFFF;border-right:1px solid #696969;border-bottom:1px solid #696969;box-shadow:inset -1px -1px 0 #A0A0A0"></div>
<svg style="left:664px;top:282px" width="32" height="32" viewBox="0 0 32 32">
<defs><radialGradient id="lg9" cx="0.35" cy="0.3" r="0.8"><stop offset="0" stop-color="#F0F8FF"/><stop offset="0.35" stop-color="#94BCF2"/><stop offset="1" stop-color="#DFF6FF"/></radialGradient></defs>
<path d="M20.8 20.4 L26.8 25.6" stroke="#C86A08" stroke-width="4.4" stroke-linecap="round"/>
<path d="M20.8 20.4 L26.8 25.6" stroke="#F8C030" stroke-width="2" stroke-linecap="round"/>
<circle cx="13.1" cy="12.6" r="7.6" fill="url(#lg9)" stroke="#4E3E4E" stroke-width="1.1"/>
<circle cx="11" cy="10.5" r="2" fill="#FFFFFF" opacity="0.7"/>
</svg>

<div class="t" style="left:697.40px;top:293.49px;font-size:13.00px;font-weight:bold;letter-spacing:0.045px;">Pesquisar</div>
<svg style="left:822px;top:282px" width="36" height="36" viewBox="0 0 36 36">
<defs><linearGradient id="pb10" x1="0" y1="0" x2="0" y2="1"><stop offset="0" stop-color="#FFFFFF"/><stop offset="1" stop-color="#D8D8D8"/></linearGradient>
<linearGradient id="pl10" x1="0" y1="0" x2="0" y2="1"><stop offset="0" stop-color="#5C9EC0"/><stop offset="0.2" stop-color="#8ED4E8"/><stop offset="0.8" stop-color="#8ACCE0"/><stop offset="1" stop-color="#4E8CAE"/></linearGradient></defs>
<rect x="10.2" y="2.4" width="15.4" height="8" fill="#FDFDFD" stroke="#7A7A7A" stroke-width="0.8"/>
<rect x="3.5" y="9.3" width="29.2" height="17.2" rx="3" fill="url(#pb10)" stroke="#3A3A3A" stroke-width="0.9"/>
<rect x="9.2" y="9.4" width="17.4" height="10" rx="1.5" fill="url(#pl10)"/>
<rect x="9.2" y="22.4" width="17.4" height="2" fill="#3A3A3A"/>
<rect x="10.2" y="22.6" width="15.4" height="8.9" fill="#FDFDFD" stroke="#7A7A7A" stroke-width="0.8"/>
</svg>

<div class="a" style="left:7px;top:329px;width:1351px;height:1px;background:#A0A0A0;"></div>
<div class="a" style="left:8px;top:331px;width:1349px;height:1px;background:#8C8C8C;"></div>
<div class="a" style="left:8px;top:331px;width:1px;height:305px;background:#A0A0A0;"></div>
<div class="a" style="left:9px;top:332px;width:1348px;height:1px;background:#696969;"></div>
<div class="a" style="left:9px;top:332px;width:1px;height:303px;background:#696969;"></div>
<div class="a" style="left:10px;top:333px;width:1347px;height:302px;background:#FFFFFF;"></div>
<div class="a" style="left:8px;top:635px;width:1350px;height:1px;background:#E3E3E3;"></div>
<div class="a" style="left:21px;top:333px;width:1px;height:18px;background:#000;"></div>
<div class="a" style="left:20px;top:333px;width:1px;height:17px;background:#D0D0D0;"></div>
<div class="a" style="left:96px;top:333px;width:1px;height:18px;background:#000;"></div>
<div class="a" style="left:95px;top:333px;width:1px;height:17px;background:#D0D0D0;"></div>
<div class="a" style="left:497px;top:333px;width:1px;height:18px;background:#000;"></div>
<div class="a" style="left:496px;top:333px;width:1px;height:17px;background:#D0D0D0;"></div>
<div class="a" style="left:583px;top:333px;width:1px;height:18px;background:#000;"></div>
<div class="a" style="left:582px;top:333px;width:1px;height:17px;background:#D0D0D0;"></div>
<div class="a" style="left:658px;top:333px;width:1px;height:18px;background:#000;"></div>
<div class="a" style="left:657px;top:333px;width:1px;height:17px;background:#D0D0D0;"></div>
<div class="a" style="left:873px;top:333px;width:1px;height:18px;background:#000;"></div>
<div class="a" style="left:872px;top:333px;width:1px;height:17px;background:#D0D0D0;"></div>
<div class="a" style="left:974px;top:333px;width:1px;height:18px;background:#000;"></div>
<div class="a" style="left:973px;top:333px;width:1px;height:17px;background:#D0D0D0;"></div>
<div class="a" style="left:1075px;top:333px;width:1px;height:18px;background:#000;"></div>
<div class="a" style="left:1074px;top:333px;width:1px;height:17px;background:#D0D0D0;"></div>
<div class="a" style="left:10px;top:350px;width:1066px;height:1px;background:#000;"></div>
<div class="a" style="left:10px;top:349px;width:1065px;height:1px;background:#D8D8D8;"></div>
<div class="t" style="left:23.10px;top:336.68px;font-size:11.00px;letter-spacing:-0.394px;">Código</div>
<div class="t" style="left:97.80px;top:336.68px;font-size:11.00px;letter-spacing:-0.774px;">DESCRICAO</div>
<div class="t" style="left:499.50px;top:336.68px;font-size:11.00px;letter-spacing:-0.219px;">Data Vencimento</div>
<div class="t" style="left:585.00px;top:336.68px;font-size:11.00px;letter-spacing:-0.162px;">Data Pagto</div>
<div class="t" style="left:660.00px;top:336.68px;font-size:11.00px;letter-spacing:-0.268px;">Forma Pagto</div>
<div class="t" style="left:875.30px;top:336.68px;font-size:11.00px;letter-spacing:-0.340px;">Valor Parcela</div>
<div class="t" style="left:976.30px;top:336.68px;font-size:11.00px;letter-spacing:-0.325px;">Valor Pago</div>
<div class="a" style="left:22px;top:351px;width:74px;height:20px;background:#A6CAF0;"></div>
<div class="a" style="left:10px;top:371px;width:12px;height:1px;background:#000;"></div>
<div class="a" style="left:10px;top:370px;width:11px;height:1px;background:#E0E0E0;"></div>
<div class="a" style="left:21px;top:351px;width:1px;height:21px;background:#000;"></div>
<div class="a" style="left:22px;top:371px;width:1054px;height:1px;background:#C8C8C8;"></div>
<div class="a" style="left:96px;top:351px;width:1px;height:21px;background:#C8C8C8;"></div>
<div class="a" style="left:497px;top:351px;width:1px;height:21px;background:#C8C8C8;"></div>
<div class="a" style="left:583px;top:351px;width:1px;height:21px;background:#C8C8C8;"></div>
<div class="a" style="left:658px;top:351px;width:1px;height:21px;background:#C8C8C8;"></div>
<div class="a" style="left:873px;top:351px;width:1px;height:21px;background:#C8C8C8;"></div>
<div class="a" style="left:974px;top:351px;width:1px;height:21px;background:#C8C8C8;"></div>
<div class="a" style="left:1075px;top:351px;width:1px;height:21px;background:#C8C8C8;"></div>
<div class="t" style="left:71.53px;top:356.41px;font-size:12.50px;color:#0000FF;">124</div>
<div class="t" style="left:100.80px;top:356.41px;font-size:12.50px;color:#0000FF;letter-spacing:-0.541px;">CARTAO DE CREDITO</div>
<div class="t" style="left:501.50px;top:356.41px;font-size:12.50px;color:#0000FF;letter-spacing:0.249px;">20/05/2020</div>
<div class="t" style="left:919.85px;top:356.41px;font-size:12.50px;color:#0000FF;">R$ 50,00</div>
<div class="a" style="left:10px;top:392px;width:12px;height:1px;background:#000;"></div>
<div class="a" style="left:10px;top:391px;width:11px;height:1px;background:#E0E0E0;"></div>
<div class="a" style="left:21px;top:372px;width:1px;height:21px;background:#000;"></div>
<div class="a" style="left:22px;top:392px;width:1054px;height:1px;background:#C8C8C8;"></div>
<div class="a" style="left:96px;top:372px;width:1px;height:21px;background:#C8C8C8;"></div>
<div class="a" style="left:497px;top:372px;width:1px;height:21px;background:#C8C8C8;"></div>
<div class="a" style="left:583px;top:372px;width:1px;height:21px;background:#C8C8C8;"></div>
<div class="a" style="left:658px;top:372px;width:1px;height:21px;background:#C8C8C8;"></div>
<div class="a" style="left:873px;top:372px;width:1px;height:21px;background:#C8C8C8;"></div>
<div class="a" style="left:974px;top:372px;width:1px;height:21px;background:#C8C8C8;"></div>
<div class="a" style="left:1075px;top:372px;width:1px;height:21px;background:#C8C8C8;"></div>
<div class="t" style="left:71.53px;top:377.41px;font-size:12.50px;color:#0000FF;">125</div>
<div class="t" style="left:100.80px;top:377.41px;font-size:12.50px;color:#0000FF;letter-spacing:-0.541px;">TESTE</div>
<div class="t" style="left:501.50px;top:377.41px;font-size:12.50px;color:#0000FF;letter-spacing:0.249px;">20/06/2020</div>
<div class="t" style="left:912.91px;top:377.41px;font-size:12.50px;color:#0000FF;">R$ 100,00</div>
<div class="a" style="left:10px;top:413px;width:12px;height:1px;background:#000;"></div>
<div class="a" style="left:10px;top:412px;width:11px;height:1px;background:#E0E0E0;"></div>
<div class="a" style="left:21px;top:393px;width:1px;height:21px;background:#000;"></div>
<div class="a" style="left:22px;top:413px;width:1054px;height:1px;background:#C8C8C8;"></div>
<div class="a" style="left:96px;top:393px;width:1px;height:21px;background:#C8C8C8;"></div>
<div class="a" style="left:497px;top:393px;width:1px;height:21px;background:#C8C8C8;"></div>
<div class="a" style="left:583px;top:393px;width:1px;height:21px;background:#C8C8C8;"></div>
<div class="a" style="left:658px;top:393px;width:1px;height:21px;background:#C8C8C8;"></div>
<div class="a" style="left:873px;top:393px;width:1px;height:21px;background:#C8C8C8;"></div>
<div class="a" style="left:974px;top:393px;width:1px;height:21px;background:#C8C8C8;"></div>
<div class="a" style="left:1075px;top:393px;width:1px;height:21px;background:#C8C8C8;"></div>
<div class="t" style="left:71.53px;top:398.41px;font-size:12.50px;color:#0000FF;">126</div>
<div class="t" style="left:100.80px;top:398.41px;font-size:12.50px;color:#0000FF;letter-spacing:-0.541px;">EMPRESTIMO</div>
<div class="t" style="left:501.50px;top:398.41px;font-size:12.50px;color:#0000FF;letter-spacing:0.249px;">03/07/2020</div>
<div class="t" style="left:912.91px;top:398.41px;font-size:12.50px;color:#0000FF;">R$ 300,00</div>
<div class="a" style="left:10px;top:434px;width:12px;height:1px;background:#000;"></div>
<div class="a" style="left:10px;top:433px;width:11px;height:1px;background:#E0E0E0;"></div>
<div class="a" style="left:21px;top:414px;width:1px;height:21px;background:#000;"></div>
<div class="a" style="left:22px;top:434px;width:1054px;height:1px;background:#C8C8C8;"></div>
<div class="a" style="left:96px;top:414px;width:1px;height:21px;background:#C8C8C8;"></div>
<div class="a" style="left:497px;top:414px;width:1px;height:21px;background:#C8C8C8;"></div>
<div class="a" style="left:583px;top:414px;width:1px;height:21px;background:#C8C8C8;"></div>
<div class="a" style="left:658px;top:414px;width:1px;height:21px;background:#C8C8C8;"></div>
<div class="a" style="left:873px;top:414px;width:1px;height:21px;background:#C8C8C8;"></div>
<div class="a" style="left:974px;top:414px;width:1px;height:21px;background:#C8C8C8;"></div>
<div class="a" style="left:1075px;top:414px;width:1px;height:21px;background:#C8C8C8;"></div>
<div class="t" style="left:71.53px;top:419.41px;font-size:12.50px;color:#0000FF;">127</div>
<div class="t" style="left:100.80px;top:419.41px;font-size:12.50px;color:#0000FF;letter-spacing:-0.541px;">AGUA</div>
<div class="t" style="left:501.50px;top:419.41px;font-size:12.50px;color:#0000FF;letter-spacing:0.249px;">02/08/2020</div>
<div class="t" style="left:919.85px;top:419.41px;font-size:12.50px;color:#0000FF;">R$ 50,00</div>
<div class="a" style="left:10px;top:455px;width:12px;height:1px;background:#000;"></div>
<div class="a" style="left:10px;top:454px;width:11px;height:1px;background:#E0E0E0;"></div>
<div class="a" style="left:21px;top:435px;width:1px;height:21px;background:#000;"></div>
<div class="a" style="left:22px;top:455px;width:1054px;height:1px;background:#C8C8C8;"></div>
<div class="a" style="left:96px;top:435px;width:1px;height:21px;background:#C8C8C8;"></div>
<div class="a" style="left:497px;top:435px;width:1px;height:21px;background:#C8C8C8;"></div>
<div class="a" style="left:583px;top:435px;width:1px;height:21px;background:#C8C8C8;"></div>
<div class="a" style="left:658px;top:435px;width:1px;height:21px;background:#C8C8C8;"></div>
<div class="a" style="left:873px;top:435px;width:1px;height:21px;background:#C8C8C8;"></div>
<div class="a" style="left:974px;top:435px;width:1px;height:21px;background:#C8C8C8;"></div>
<div class="a" style="left:1075px;top:435px;width:1px;height:21px;background:#C8C8C8;"></div>
<div class="t" style="left:71.53px;top:440.41px;font-size:12.50px;color:#0000FF;">128</div>
<div class="t" style="left:100.80px;top:440.41px;font-size:12.50px;color:#0000FF;letter-spacing:-0.541px;">LUZ</div>
<div class="t" style="left:501.50px;top:440.41px;font-size:12.50px;color:#0000FF;letter-spacing:0.249px;">03/09/2020</div>
<div class="t" style="left:919.85px;top:440.41px;font-size:12.50px;color:#0000FF;">R$ 80,00</div>
<div class="a" style="left:10px;top:476px;width:12px;height:1px;background:#000;"></div>
<div class="a" style="left:10px;top:475px;width:11px;height:1px;background:#E0E0E0;"></div>
<div class="a" style="left:21px;top:456px;width:1px;height:21px;background:#000;"></div>
<div class="a" style="left:22px;top:476px;width:1054px;height:1px;background:#C8C8C8;"></div>
<div class="a" style="left:96px;top:456px;width:1px;height:21px;background:#C8C8C8;"></div>
<div class="a" style="left:497px;top:456px;width:1px;height:21px;background:#C8C8C8;"></div>
<div class="a" style="left:583px;top:456px;width:1px;height:21px;background:#C8C8C8;"></div>
<div class="a" style="left:658px;top:456px;width:1px;height:21px;background:#C8C8C8;"></div>
<div class="a" style="left:873px;top:456px;width:1px;height:21px;background:#C8C8C8;"></div>
<div class="a" style="left:974px;top:456px;width:1px;height:21px;background:#C8C8C8;"></div>
<div class="a" style="left:1075px;top:456px;width:1px;height:21px;background:#C8C8C8;"></div>
<div class="t" style="left:71.53px;top:461.41px;font-size:12.50px;color:#0000FF;">129</div>
<div class="t" style="left:100.80px;top:461.41px;font-size:12.50px;color:#0000FF;letter-spacing:-0.541px;">INTERNET</div>
<div class="t" style="left:501.50px;top:461.41px;font-size:12.50px;color:#0000FF;letter-spacing:0.249px;">06/10/2020</div>
<div class="t" style="left:912.91px;top:461.41px;font-size:12.50px;color:#0000FF;">R$ 100,00</div>
<div class="a" style="left:10px;top:497px;width:12px;height:1px;background:#000;"></div>
<div class="a" style="left:10px;top:496px;width:11px;height:1px;background:#E0E0E0;"></div>
<div class="a" style="left:21px;top:477px;width:1px;height:21px;background:#000;"></div>
<div class="a" style="left:22px;top:497px;width:1054px;height:1px;background:#C8C8C8;"></div>
<div class="a" style="left:96px;top:477px;width:1px;height:21px;background:#C8C8C8;"></div>
<div class="a" style="left:497px;top:477px;width:1px;height:21px;background:#C8C8C8;"></div>
<div class="a" style="left:583px;top:477px;width:1px;height:21px;background:#C8C8C8;"></div>
<div class="a" style="left:658px;top:477px;width:1px;height:21px;background:#C8C8C8;"></div>
<div class="a" style="left:873px;top:477px;width:1px;height:21px;background:#C8C8C8;"></div>
<div class="a" style="left:974px;top:477px;width:1px;height:21px;background:#C8C8C8;"></div>
<div class="a" style="left:1075px;top:477px;width:1px;height:21px;background:#C8C8C8;"></div>
<div class="t" style="left:71.53px;top:482.41px;font-size:12.50px;color:#0000FF;">130</div>
<div class="t" style="left:100.80px;top:482.41px;font-size:12.50px;color:#0000FF;letter-spacing:-0.541px;">ALUGUEL</div>
<div class="t" style="left:501.50px;top:482.41px;font-size:12.50px;color:#0000FF;letter-spacing:0.353px;">20/11/2020</div>
<div class="t" style="left:912.91px;top:482.41px;font-size:12.50px;color:#0000FF;">R$ 800,00</div>
<svg style="left:13px;top:355px" width="7" height="12" viewBox="0 0 7 12"><path d="M0 0L6.5 5.5L0 11z" fill="#000"/></svg>
<div class="a" style="left:1340px;top:333px;width:16px;height:302px;background:#F0F0F0;"></div>
<div class="a" style="left:1340px;top:350px;width:15px;height:144px;background:#CDCDCD;"></div>
<svg style="left:1343px;top:338.5px" width="10" height="7" viewBox="0 0 10 7"><path d="M1.6 5.4L5 2L8.4 5.4" stroke="#4A4A4A" stroke-width="2.3" fill="none"/></svg>
<svg style="left:1343px;top:622.5px" width="10" height="7" viewBox="0 0 10 7"><path d="M1.6 1.6L5 5L8.4 1.6" stroke="#4A4A4A" stroke-width="2.3" fill="none"/></svg>
<div class="a" style="left:1357px;top:637px;width:1px;height:51px;background:#A0A0A0;"></div>
<div class="a" style="left:7px;top:687px;width:1351px;height:1px;background:#A0A0A0;"></div>
<div class="t" style="left:672.00px;top:648.86px;font-size:20.00px;letter-spacing:-0.300px;">Total:</div>
<div class="t" style="left:749.60px;top:648.86px;font-size:20.00px;letter-spacing:-1.050px;">R$ 1.480,00</div>
<div class="a" style="left:4px;top:184px;width:1px;height:507px;background:transparent"></div>
<div class="a" style="left:4px;top:190px;width:1px;height:501px;background:#4A4A4A;"></div>
<div class="a" style="left:5px;top:210px;width:2px;height:480px;background:#DCE8F5;"></div>
<div class="a" style="left:1361px;top:190px;width:1px;height:501px;background:#4A4A4A;"></div>
<div class="a" style="left:1362px;top:190px;width:1px;height:501px;background:#707070;"></div>
<div class="a" style="left:1359px;top:210px;width:2px;height:480px;background:#DCE8F5;"></div>
<div class="a" style="left:1358px;top:210px;width:1px;height:480px;background:#A0A0A0;"></div>
<div class="a" style="left:5px;top:688px;width:1356px;height:2px;background:#DCE8F5;"></div>
<div class="a" style="left:4px;top:690px;width:1359px;height:1px;background:#4A4A4A;"></div>
<div class="a" style="left:3px;top:691px;width:1360px;height:3px;background:#93B2D6;"></div>
<div class="a" style="left:3px;top:694px;width:1360px;height:31px;background:#93B2D6;"></div>
<div class="a" style="left:3px;top:694px;width:300px;height:31px;background:#A6CAF0;border-top:1px solid #9AA7B5;border-left:1px solid #9AA7B5;border-right:1px solid #fff;border-bottom:1px solid #fff"></div>
<div class="a" style="left:305px;top:694px;width:248px;height:31px;background:#A6CAF0;border-top:1px solid #9AA7B5;border-left:1px solid #9AA7B5;border-right:1px solid #fff;border-bottom:1px solid #fff"></div>
<div class="a" style="left:555px;top:694px;width:248px;height:31px;background:#A6CAF0;border-top:1px solid #9AA7B5;border-left:1px solid #9AA7B5;border-right:1px solid #fff;border-bottom:1px solid #fff"></div>
<div class="a" style="left:805px;top:694px;width:558px;height:31px;background:#A6CAF0;border-top:1px solid #9AA7B5;border-left:1px solid #9AA7B5;border-right:1px solid #fff;border-bottom:1px solid #fff"></div>
<div class="a" style="left:0px;top:725px;width:1366px;height:7px;background:#F0C86C;"></div>
<div class="a" style="left:2px;top:725px;width:1362px;height:1px;background:#CCA856;"></div>
<div class="a" style="left:0px;top:732px;width:1366px;height:2px;background:#B08A44;"></div>
<div class="t" style="left:6.60px;top:699.14px;font-size:14.00px;font-weight:bold;letter-spacing:-0.052px;">Usuário: &nbsp;SUPORTE</div>
<div class="t" style="left:308.20px;top:697.99px;font-size:13.00px;font-weight:bold;">Versao &nbsp;- 2020.04.4</div>
<div class="t" style="left:558.60px;top:697.99px;font-size:13.00px;font-weight:bold;color:#FF0000;letter-spacing:0.041px;">Registrado até &nbsp;30/04/2020</div>
<div class="t" style="left:808.20px;top:697.99px;font-size:13.00px;font-weight:bold;letter-spacing:-0.166px;">Banco dados =NOTE-1:D:\Projetos\SysComercio\BASE.FDB</div>
</body></html>
